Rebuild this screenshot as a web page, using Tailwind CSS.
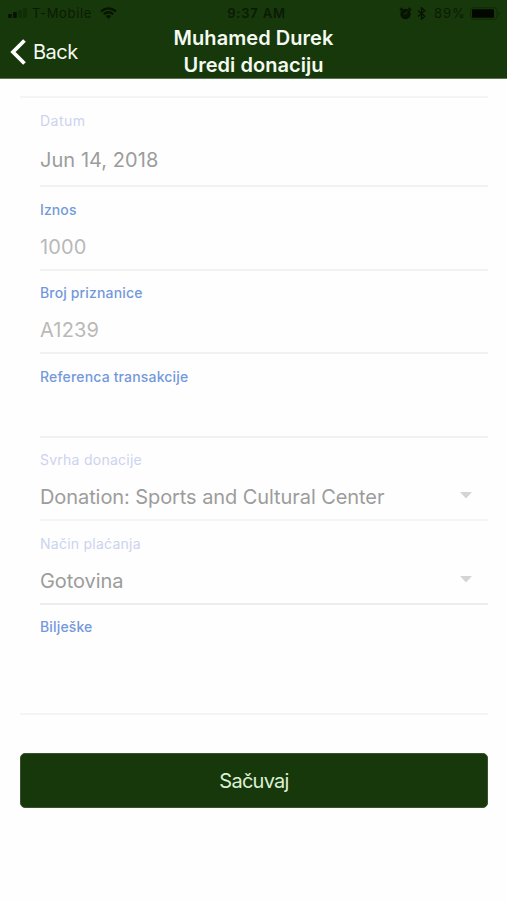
<!DOCTYPE html>
<html lang="bs">
<head>
<meta charset="utf-8">
<title>Uredi donaciju</title>
<script src="https://cdn.jsdelivr.net/npm/@tailwindcss/browser@4"></script>
</head>
<body class="w-[507px] h-[900px] overflow-hidden bg-[#fefefe] font-[Inter,'Liberation_Sans',sans-serif]">
<header class="h-[79px] bg-[#17380a] border-b border-[#5c7255]">
  <div class="h-[26px] grid grid-cols-3 items-center text-[#0a1b05] text-[13px] leading-[26px]">
    <div class="flex items-center pl-2">
      <svg class="w-[20px] h-[12px]" viewBox="0 0 20 12"><g fill="#071403"><rect x="0" y="7" width="3.800" height="4" rx="1"/><rect x="5" y="5" width="3.800" height="6" rx="1"/></g><g fill="#122d08"><rect x="10" y="3" width="3.800" height="8" rx="1"/><rect x="15" y="1" width="3.800" height="10" rx="1"/></g></svg>
      <span class="ml-[4px] w-[60px] whitespace-nowrap tracking-[0.65px]">T-Mobile</span>
      <svg class="ml-[8px] w-[17px] h-[12px]" viewBox="0 0 17 12" fill="none" stroke="#071403" stroke-width="2.300"><path d="M1 4.400Q8.500-1.700 16 4.400M3.800 7.200Q8.500 3.200 13.200 7.200"/><path d="M5.800 9.100Q8.500 6.800 11.200 9.100L8.500 12Z" fill="#071403" stroke="none"/></svg>
    </div>
    <div class="text-center font-semibold tracking-[0.8px] pl-[6px]">9:37 AM</div>
    <div class="flex items-center justify-end pr-[6px]">
      <svg class="w-[13px] h-[13px]" viewBox="0 0 13 13"><circle cx="6.500" cy="7" r="5.200" fill="#071403"/><path d="M1 3.300L3.500 1M12 3.300L9.500 1" stroke="#071403" stroke-width="1.800"/><path d="M8.300 4.300L6.500 7.200L4.700 6.500" fill="none" stroke="#17380a" stroke-width="1"/></svg>
      <svg class="ml-[5px] w-[9px] h-[13px]" viewBox="0 0 9 13" fill="none" stroke="#071403" stroke-width="1.300"><path d="M1 3.500L7.800 9.300L4.500 12.200V.8L7.800 3.700L1 9.500"/></svg>
      <span class="ml-[8px] w-[31px] whitespace-nowrap tracking-[0.9px]">89%</span>
      <svg class="ml-[5px] w-[31px] h-[13px]" viewBox="0 0 31 13"><rect x=".6" y=".8" width="26.500" height="11.400" rx="3" fill="none" stroke="#102a08"/><rect x="2" y="2.300" width="22" height="8.500" rx="1" fill="#020801"/><path d="M28.500 4.500Q31 6.500 28.500 8.500Z" fill="#102a08"/></svg>
    </div>
  </div>
  <div class="grid grid-cols-[150px_1fr_150px] h-[52px] text-[#f4faf1]">
    <div class="flex items-center pl-[10px] -mt-[2px]">
      <svg class="w-[17px] h-[26px]" viewBox="0 0 17 26" fill="none" stroke="#fff" stroke-width="3.800"><path d="M14.500 1.500L3 13L14.500 24.500"/></svg>
      <span class="ml-[6px] text-[20px] tracking-[-0.5px]">Back</span>
    </div>
    <h1 class="text-center font-semibold text-[20px] leading-[27px] tracking-[0.05px] -mt-px">Muhamed Durek<br>Uredi donaciju</h1>
  </div>
</header>
<main class="pl-5 pr-[19px] pt-[17px] text-[#9c9c9c]">
  <form class="border-y-2 border-[#f4f4f5] pl-5 h-[619px]">
    <div class="h-[89px] border-b-2 border-[#f1f1f2] pt-[13px]">
      <div class="text-[14px] leading-[20px] text-[#cbd3ee] tracking-[0.5px]">Datum</div>
      <div class="mt-[14px] text-[20px] leading-[30px] tracking-[0.05px]">Jun 14, 2018</div>
    </div>
    <div class="h-[84px] border-b-2 border-[#f1f1f2] pt-[13px]">
      <div class="text-[14px] leading-[20px] font-medium text-[#7399db] tracking-[0.1px]">Iznos</div>
      <div class="mt-[12px] text-[20px] leading-[30px] tracking-[0.15px] text-[#b9b9b9]">1000</div>
    </div>
    <div class="h-[83px] border-b-2 border-[#f1f1f2] pt-[12px]">
      <div class="text-[14px] leading-[20px] font-medium text-[#7399db] tracking-[0.15px]">Broj priznanice</div>
      <div class="mt-[12px] text-[20px] leading-[30px] tracking-[0.2px] text-[#b9b9b9]">A1239</div>
    </div>
    <div class="h-[84px] border-b-2 border-[#f1f1f2] pt-[13px]">
      <div class="text-[14px] leading-[20px] font-medium text-[#7399db] tracking-[0.17px]">Referenca transakcije</div>
    </div>
    <div class="h-[83px] border-b-2 border-[#f4f4f5] pt-[12px]">
      <div class="text-[14px] leading-[20px] text-[#cbd3ee] tracking-[0.25px]">Svrha donacije</div>
      <div class="mt-[12px] pr-4 flex items-center justify-between text-[20px] leading-[30px] tracking-[-0.08px]"><span>Donation: Sports and Cultural Center</span><svg class="w-[12px] h-[7px] -mt-[3px]" viewBox="0 0 12 7"><path d="M0 0H12L6 6.500Z" fill="#d4d4d4"/></svg></div>
    </div>
    <div class="h-[84px] border-b-2 border-[#ededee] pt-[13px]">
      <div class="text-[14px] leading-[20px] text-[#cbd3ee] tracking-[0.25px]">Način plaćanja</div>
      <div class="mt-[12px] pr-4 flex items-center justify-between text-[20px] leading-[30px] tracking-[-0.08px]"><span>Gotovina</span><svg class="w-[12px] h-[7px] -mt-[4px]" viewBox="0 0 12 7"><path d="M0 0H12L6 6.500Z" fill="#d4d4d4"/></svg></div>
    </div>
    <div class="pt-[12px] text-[14px] leading-[20px] font-medium text-[#7399db] tracking-[0.15px]">Bilješke</div>
  </form>
  <button class="mt-[38px] block w-full h-[55px] rounded-[5px] bg-[#17380a] border border-[#385330] text-[#dcefd5] text-[20px] tracking-[-0.75px]">Sačuvaj</button>
</main>
</body>
</html>
